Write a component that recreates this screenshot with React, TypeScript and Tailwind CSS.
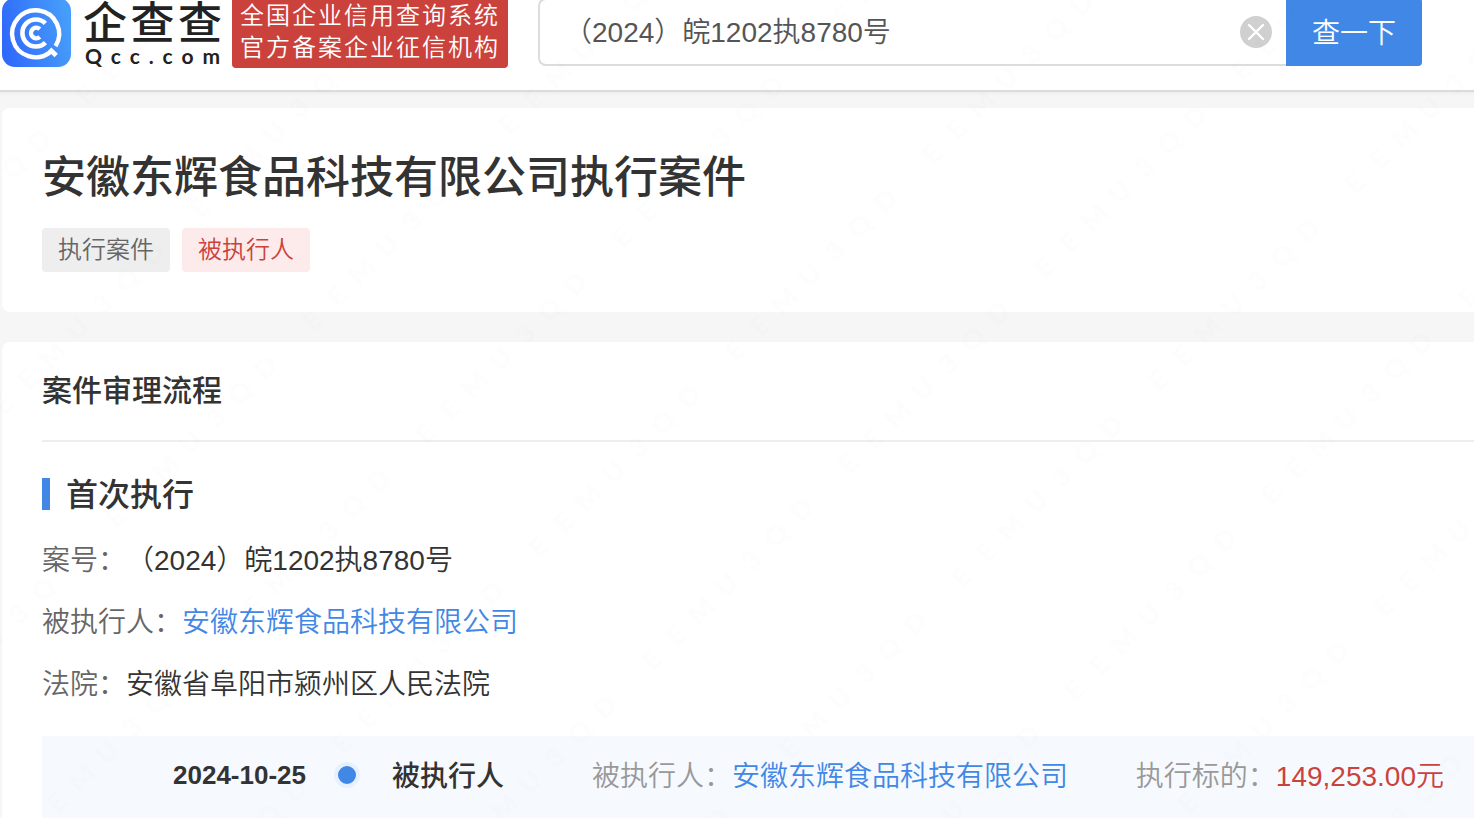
import { useState } from "react";

const COMPANY = "安徽东辉食品科技有限公司";

function LogoMark() {
  return (
    <svg viewBox="0 0 69 69" className="block h-[69px] w-[69px] shrink-0" aria-hidden="true">
      <defs>
        <linearGradient id="mark" x1="0" y1="0.6" x2="1" y2="0.4">
          <stop offset="0" stopColor="#2f69fb" />
          <stop offset="1" stopColor="#479efa" />
        </linearGradient>
      </defs>
      <rect width="69" height="69" rx="13" fill="url(#mark)" />
      <g fill="none" stroke="#fff" strokeWidth="4.4">
        <path d="M53.6 48.1A23.5 23.5 0 1 0 48.4 54" />
        <path d="M47.6 51.2 54.2 57.4" strokeWidth="4.8" />
        <path d="M43.4 25.4A13.5 13.5 0 1 0 43.4 44.6" strokeWidth="4.6" />
        <path d="M37.8 31.2A5.2 5.2 0 1 0 37.8 38.8" strokeWidth="4.4" />
      </g>
    </svg>
  );
}

function Watermark() {
  return (
    <svg className="pointer-events-none absolute inset-0 h-full w-full" aria-hidden="true">
      <defs>
        <pattern id="wm" x="-26" y="-1" width="278" height="160" patternUnits="userSpaceOnUse" patternTransform="rotate(-45)">
          <text
            x="20 55 90 126 161 196 232"
            y="138"
            textAnchor="middle"
            fontSize="27"
            fill="#000"
            fillOpacity="0.008"
            fontWeight="700"
            fontFamily="Lato, sans-serif"
          >
            EEMU3QD
          </text>
        </pattern>
      </defs>
      <rect width="100%" height="100%" fill="url(#wm)" />
    </svg>
  );
}

function Header() {
  const [query, setQuery] = useState("（2024）皖1202执8780号");
  return (
    <header className="relative flex h-[92px] items-start border-b-2 border-[#dcdcdc] bg-white pr-[52px] pl-0.5">
      <a href="#home" className="flex shrink-0 items-start gap-3 text-[#222]">
        <span className="-mt-0.5">
          <LogoMark />
        </span>
        <span className="flex w-[139px] flex-col">
          <span className="flex justify-between text-[44px] leading-[48px] font-medium">
            <span>企</span>
            <span>查</span>
            <span>查</span>
          </span>
          <span className="flex justify-between px-0.5 font-['Lato'] text-[21px] leading-4 font-bold">
            {"Qcc.com".split("").map((c, i) => (
              <span key={i}>{c}</span>
            ))}
          </span>
        </span>
      </a>
      <p className="ml-2.5 h-[68px] w-[276px] shrink-0 rounded-b-sm bg-[#cb423d] pr-2.5 pl-2 text-[24px] leading-8 font-[350] text-white">
        <span className="block [text-align-last:justify]">全国企业信用查询系统</span>
        <span className="block [text-align-last:justify]">官方备案企业征信机构</span>
      </p>
      <form className="-mt-0.5 ml-[30px] flex h-[68px] min-w-0 flex-1" onSubmit={(e) => e.preventDefault()}>
        <div className="flex min-w-0 flex-1 items-center rounded-l-lg border-2 border-r-0 border-[#dcdcdc] pr-3.5 pl-6">
          <input
            aria-label="搜索"
            value={query}
            onChange={(e) => setQuery(e.target.value)}
            className="min-w-0 flex-1 bg-transparent pt-0.5 text-[28px] leading-10 font-[350] text-[#555] outline-none"
          />
          <button type="button" aria-label="清除" onClick={() => setQuery("")} className="shrink-0">
            <svg viewBox="0 0 32 32" className="block h-8 w-8">
              <circle cx="16" cy="16" r="16" fill="#d0d0d0" />
              <path d="m9 9 14 14M23 9 9 23" stroke="#fff" strokeWidth="2.4" strokeLinecap="round" />
            </svg>
          </button>
        </div>
        <button type="submit" className="w-[136px] shrink-0 rounded-r bg-[#4188e6] pt-1 text-[28px] font-[350] text-white">
          查一下
        </button>
      </form>
    </header>
  );
}

export default function App() {
  return (
    <div className="relative min-h-screen overflow-hidden bg-[#f6f6f6] font-['Liberation_Sans','Noto_Sans_CJK_SC',sans-serif] text-[#333]">
      <Header />
      <div className="h-1 bg-linear-to-b from-[#eeeeee] to-[#f6f6f6]" />
      <main className="flex flex-col gap-[30px] pt-3 pl-0.5">
        <section className="rounded-l-lg bg-white px-10 pt-[37px] pb-10">
          <h1 className="text-[44px] leading-[66px] font-medium">{COMPANY}执行案件</h1>
          <div className="mt-[17px] flex gap-3 text-[24px] leading-[44px] font-[350]">
            <span className="rounded bg-[#eeeeee] px-4 text-[#666]">执行案件</span>
            <span className="rounded bg-[#fdebeb] px-4 text-[#cb423d]">被执行人</span>
          </div>
        </section>

        <section className="rounded-tl-lg bg-white pl-10">
          <h2 className="border-b-2 border-[#eeeeee] text-[30px] leading-[98px] font-medium">案件审理流程</h2>
          <h3 className="mt-[27px] flex items-center gap-4 text-[32px] leading-[48px] font-medium">
            <span className="h-8 w-2 bg-[#4188e6]" />
            <span className="pt-0.5">首次执行</span>
          </h3>
          <dl className="mt-[11px] text-[28px] leading-[62px] font-[350]">
            <div className="flex">
              <dt className="text-[#666]">案号：</dt>
              <dd>（2024）皖1202执8780号</dd>
            </div>
            <div className="flex">
              <dt className="text-[#666]">被执行人：</dt>
              <dd>
                <a href="#company" className="text-[#4188e6]">{COMPANY}</a>
              </dd>
            </div>
            <div className="flex">
              <dt className="text-[#666]">法院：</dt>
              <dd>安徽省阜阳市颍州区人民法院</dd>
            </div>
          </dl>
          <div className="mt-5 flex h-[82px] items-center bg-[#f6faff] pr-[30px] pb-1 pl-[131px] text-[28px] leading-10 font-[350] whitespace-nowrap">
            <time dateTime="2024-10-25" className="text-[26px] font-bold">2024-10-25</time>
            <span className="ml-7 h-[26px] w-[26px] shrink-0 rounded-full border-4 border-[#e6f1ff] bg-[#4188e6]" />
            <div className="flex flex-1 items-center pt-1 pl-8">
              <span className="font-medium">被执行人</span>
              <span className="ml-[88px] text-[#999]">被执行人：</span>
              <a href="#company" className="text-[#4188e6]">{COMPANY}</a>
              <span className="ml-auto text-[#999]">执行标的：</span>
              <span className="text-[#cb423d]">149,253.00元</span>
            </div>
          </div>
        </section>
      </main>
      <Watermark />
    </div>
  );
}
